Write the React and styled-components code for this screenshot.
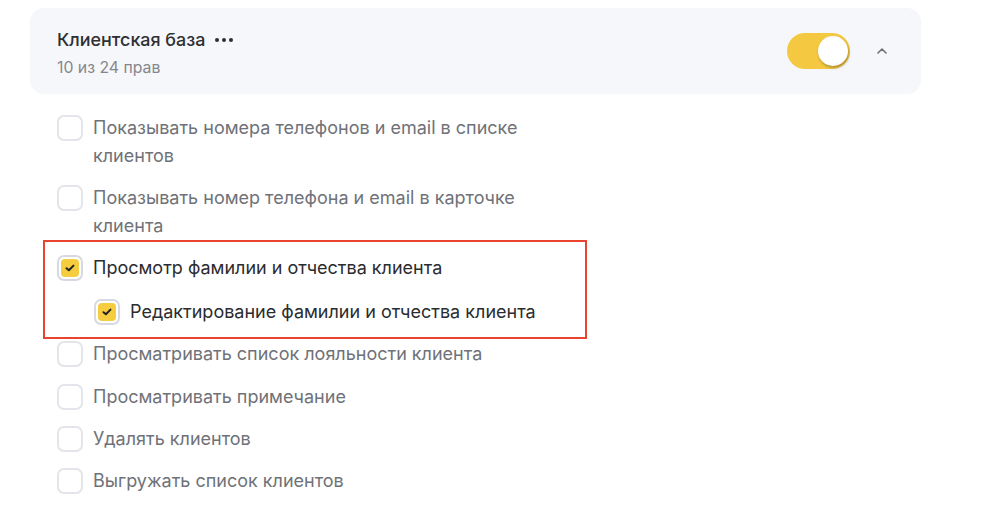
import React from "react";
import styled, { createGlobalStyle } from "styled-components";

const Global = createGlobalStyle`
  html, body { margin: 0; padding: 0; background: #ffffff; }
  body { font-family: Inter, "Noto Sans", sans-serif; -webkit-font-smoothing: antialiased; }
`;

const Page = styled.div`
  padding: 8px 79px 0 30px;
`;

const Card = styled.section`
  background: #f6f7fa;
  border-radius: 14px;
  height: 86px;
  box-sizing: border-box;
  padding: 0 32px 0 27px;
  display: flex;
  align-items: center;
`;

const HeadText = styled.div`
  flex: 1;
  display: flex;
  flex-direction: column;
  gap: 7px;
  padding-top: 4px;
`;

const TitleRow = styled.div`
  display: flex;
  align-items: center;
  gap: 10px;
`;

const Title = styled.h2`
  margin: 0;
  font-size: 17.9px;
  line-height: 22px;
  font-weight: 500;
  color: #2e2f33;
`;

const Dots = styled.span`
  display: flex;
  gap: 3px;
  padding-top: 1px;
  & > i {
    width: 4px;
    height: 4px;
    border-radius: 50%;
    background: #2e2f33;
  }
`;

const Sub = styled.div`
  font-size: 15.8px;
  line-height: 20px;
  color: #85878d;
`;

const Toggle = styled.div`
  width: 63px;
  height: 36px;
  border-radius: 18px;
  background: ${(p) => (p.$on ? "#f5c842" : "#dcdee3")};
  display: flex;
  align-items: center;
  justify-content: ${(p) => (p.$on ? "flex-end" : "flex-start")};
  padding: 0 2px;
  box-sizing: border-box;
`;

const Knob = styled.span`
  width: 30px;
  height: 30px;
  border-radius: 50%;
  background: #ffffff;
  box-shadow: 1px 2px 3px rgba(0, 0, 0, 0.28);
`;

const Chevron = styled.svg`
  margin-left: 25px;
  width: 14px;
  height: 14px;
`;

const List = styled.div`
  padding: 20px 0 0 27px;
  display: flex;
  flex-direction: column;
  gap: 14.4px;
`;

const Row = styled.label`
  display: flex;
  align-items: flex-start;
  gap: 10px;
  padding-left: ${(p) => (p.$nested ? "37px" : "0")};
  margin-top: ${(p) => (p.$nested ? "1.6px" : "0")};
`;

const Box = styled.span`
  flex: none;
  width: 26px;
  height: 26px;
  margin-top: 1px;
  box-sizing: border-box;
  border-radius: 7px;
  border: 2px solid ${(p) => (p.$checked ? "#d6d9e0" : "#e3e5eb")};
  background: #ffffff;
  padding: 2px;
  display: flex;
`;

const Fill = styled.span`
  flex: 1;
  border-radius: 4px;
  background: #f6cd3f;
  display: flex;
  align-items: center;
  justify-content: center;
`;

const Label = styled.span`
  font-size: 18px;
  line-height: 28px;
  color: ${(p) => (p.$checked ? "#2b2c30" : "#6f7278")};
  max-width: 450px;
`;

const Group = styled.div`
  position: relative;
  display: flex;
  flex-direction: column;
  gap: 14.4px;
  margin-top: -1px;
  &::after {
    content: "";
    position: absolute;
    left: -14px;
    top: -14px;
    width: 544px;
    bottom: -13px;
    border: 2px solid #e8442f;
    box-sizing: border-box;
    pointer-events: none;
  }
`;

const Check = () => (
  <svg width="10" height="8" viewBox="0 0 10 8">
    <path d="M1.5 4.2 L3.9 6.3 L8.5 1.6" fill="none" stroke="#222222" strokeWidth="2" strokeLinecap="round" strokeLinejoin="round" />
  </svg>
);

const Item = ({ checked, nested, children }) => (
  <Row $nested={nested}>
    <Box $checked={checked}>{checked && <Fill><Check /></Fill>}</Box>
    <Label $checked={checked}>{children}</Label>
  </Row>
);

export default function App() {
  return (
    <Page>
      <Global />
      <Card>
        <HeadText>
          <TitleRow>
            <Title>Клиентская база</Title>
            <Dots><i /><i /><i /></Dots>
          </TitleRow>
          <Sub>10 из 24 прав</Sub>
        </HeadText>
        <Toggle $on>
          <Knob />
        </Toggle>
        <Chevron viewBox="0 0 14 14">
          <path d="M3 9 L7 5 L11 9" fill="none" stroke="#6d6f75" strokeWidth="1.6" strokeLinecap="round" strokeLinejoin="round" />
        </Chevron>
      </Card>
      <List>
        <Item>Показывать номера телефонов и email в списке клиентов</Item>
        <Item>Показывать номер телефона и email в карточке клиента</Item>
        <Group>
          <Item checked>Просмотр фамилии и отчества клиента</Item>
          <Item checked nested>Редактирование фамилии и отчества клиента</Item>
        </Group>
        <Item>Просматривать список лояльности клиента</Item>
        <Item>Просматривать примечание</Item>
        <Item>Удалять клиентов</Item>
        <Item>Выгружать список клиентов</Item>
      </List>
    </Page>
  );
}
